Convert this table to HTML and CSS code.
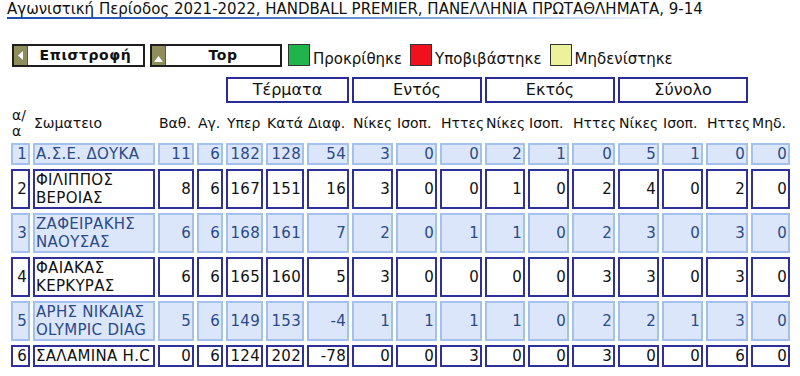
FILE: index.html
```html
<!DOCTYPE html>
<html lang="el">
<head>
<meta charset="utf-8">
<title>Βαθμολογία</title>
<link rel="stylesheet" href="styles.css">
</head>
<body>
<div class="title">Αγωνιστική Περίοδος 2021-2022, HANDBALL PREMIER, ΠΑΝΕΛΛΗΝΙΑ ΠΡΩΤΑΘΛΗΜΑΤΑ, 9-14</div>
<div class="rule"></div>

<div class="toolbar">
  <a class="btn btn-back" href="#">
    <span class="btn-side"><svg width="6" height="9" viewBox="0 0 6 9"><polygon points="5,0 5,9 0,4.5" fill="#fff"/></svg></span>
    <span class="btn-label">Επιστροφή</span>
  </a>
  <a class="btn btn-top" href="#">
    <span class="btn-side side-low"><svg width="9" height="6" viewBox="0 0 9 6"><polygon points="0,6 9,6 4.5,0" fill="#fff"/></svg></span>
    <span class="btn-label">Top</span>
  </a>
  <span class="legend legend-first"><span class="swatch sw-green"></span><span class="legend-text">Προκρίθηκε</span></span>
  <span class="legend"><span class="swatch sw-red"></span><span class="legend-text">Υποβιβάστηκε</span></span>
  <span class="legend"><span class="swatch sw-yellow"></span><span class="legend-text">Μηδενίστηκε</span></span>
</div>

<table class="standings">
  <colgroup>
    <col class="c-pos"><col class="c-name"><col class="c-pts"><col class="c-gp">
    <col class="c-for"><col class="c-against"><col class="c-diff">
    <col class="c-w1"><col class="c-d1"><col class="c-l1">
    <col class="c-w2"><col class="c-d2"><col class="c-l2">
    <col class="c-w3"><col class="c-d3"><col class="c-l3">
    <col class="c-z">
  </colgroup>
  <tr class="groups">
    <td colspan="4" class="blank"></td>
    <td colspan="3" class="grp">Τέρματα</td>
    <td colspan="3" class="grp">Εντός</td>
    <td colspan="3" class="grp">Εκτός</td>
    <td colspan="3" class="grp">Σύνολο</td>
    <td class="blank"></td>
  </tr>
  <tr class="heads">
    <th>α/ α</th><th>Σωματειο</th><th>Βαθ.</th><th>Αγ.</th><th>Υπερ</th><th>Κατά</th><th>Διαφ.</th>
    <th>Νίκες</th><th>Ισοπ.</th><th>Ηττες</th><th>Νίκες</th><th>Ισοπ.</th><th>Ηττες</th>
    <th>Νίκες</th><th>Ισοπ.</th><th>Ηττες</th><th>Μηδ.</th>
  </tr>
  <tr class="row alt">
    <td>1</td><td class="name">Α.Σ.Ε. ΔΟΥΚΑ</td><td>11</td><td>6</td><td>182</td><td>128</td><td>54</td>
    <td>3</td><td>0</td><td>0</td><td>2</td><td>1</td><td>0</td><td>5</td><td>1</td><td>0</td><td>0</td>
  </tr>
  <tr class="row">
    <td>2</td><td class="name">ΦΙΛΙΠΠΟΣ ΒΕΡΟΙΑΣ</td><td>8</td><td>6</td><td>167</td><td>151</td><td>16</td>
    <td>3</td><td>0</td><td>0</td><td>1</td><td>0</td><td>2</td><td>4</td><td>0</td><td>2</td><td>0</td>
  </tr>
  <tr class="row alt">
    <td>3</td><td class="name">ΖΑΦΕΙΡΑΚΗΣ ΝΑΟΥΣΑΣ</td><td>6</td><td>6</td><td>168</td><td>161</td><td>7</td>
    <td>2</td><td>0</td><td>1</td><td>1</td><td>0</td><td>2</td><td>3</td><td>0</td><td>3</td><td>0</td>
  </tr>
  <tr class="row">
    <td>4</td><td class="name">ΦΑΙΑΚΑΣ ΚΕΡΚΥΡΑΣ</td><td>6</td><td>6</td><td>165</td><td>160</td><td>5</td>
    <td>3</td><td>0</td><td>0</td><td>0</td><td>0</td><td>3</td><td>3</td><td>0</td><td>3</td><td>0</td>
  </tr>
  <tr class="row alt">
    <td>5</td><td class="name">ΑΡΗΣ ΝΙΚΑΙΑΣ OLYMPIC DIAG</td><td>5</td><td>6</td><td>149</td><td>153</td><td>-4</td>
    <td>1</td><td>1</td><td>1</td><td>1</td><td>0</td><td>2</td><td>2</td><td>1</td><td>3</td><td>0</td>
  </tr>
  <tr class="row">
    <td>6</td><td class="name">ΣΑΛΑΜΙΝΑ Η.C</td><td>0</td><td>6</td><td>124</td><td>202</td><td>-78</td>
    <td>0</td><td>0</td><td>3</td><td>0</td><td>0</td><td>3</td><td>0</td><td>0</td><td>6</td><td>0</td>
  </tr>
</table>
</body>
</html>
```

FILE: styles.css
```css
* { box-sizing: border-box; }

html, body {
  margin: 0;
  padding: 0;
  background: #fff;
}

body {
  padding: 0 8px;
  font-family: "DejaVu Sans", Verdana, sans-serif;
  color: #000;
}

.title {
  margin-left: -1px;
  padding-top: 2px;
  font-size: 15px;
  line-height: 15px;
  white-space: nowrap;
  color: #111;
}

.rule {
  margin-left: -1px;
  width: 660px;
  height: 2px;
  background: linear-gradient(to right, #1a4bb0 0%, #3f6cc0 35%, #8fb0e0 70%, rgba(255,255,255,0) 100%);
}

.toolbar {
  display: flex;
  align-items: flex-end;
  height: 23px;
  margin-top: 25px;
  padding-left: 4px;
}

.btn {
  display: flex;
  width: 133px;
  height: 23px;
  border: 2px solid #1e1e1e;
  text-decoration: none;
  color: #111;
  background: #fff;
}

.btn-top {
  margin-left: 5px;
  width: 132px;
}

.btn-side {
  width: 14px;
  flex: none;
  background: #8e8e5c;
  display: flex;
  align-items: center;
  justify-content: center;
  border-right: 1px solid #5a5a3a;
}

.side-low {
  align-items: flex-end;
  padding-bottom: 3px;
}

.btn-label {
  flex: 1;
  text-align: center;
  font-weight: bold;
  font-size: 14px;
  line-height: 19px;
  letter-spacing: 0.6px;
}

.legend {
  display: flex;
  align-items: flex-end;
  margin-left: 8px;
}

.legend-first {
  margin-left: 6px;
}

.swatch {
  width: 22px;
  height: 22px;
  border: 1px solid #333;
  margin-bottom: 1px;
}

.sw-green { background: #20b54a; }
.sw-red { background: #f0101e; }
.sw-yellow { background: #ecf29a; }

.legend-text {
  margin-left: 3px;
  font-size: 15px;
  line-height: 16px;
  color: #111;
}

.standings {
  margin-top: 6px;
  border-collapse: separate;
  border-spacing: 3px 4px;
  table-layout: fixed;
  width: 785px;
  font-size: 14px;
}

.c-pos { width: 19px; }
.c-name { width: 122px; }
.c-pts { width: 36px; }
.c-gp { width: 26px; }
.c-for { width: 37px; }
.c-against { width: 38px; }
.c-diff { width: 42px; }
.c-w1 { width: 41px; }
.c-d1 { width: 41px; }
.c-l1 { width: 42px; }
.c-w2 { width: 40px; }
.c-d2 { width: 41px; }
.c-l2 { width: 43px; }
.c-w3 { width: 41px; }
.c-d3 { width: 41px; }
.c-l3 { width: 42px; }
.c-z { width: 39px; }

.groups td {
  padding: 0;
}

.groups .grp {
  border: 2px solid #2b2b98;
  background: #fff;
  text-align: center;
  font-size: 16px;
  line-height: 22px;
  color: #111;
}

.groups .blank {
  border: 0;
}

.heads th {
  font-weight: normal;
  text-align: left;
  vertical-align: middle;
  padding: 0 0 0 1px;
  border: 0;
  line-height: 16px;
  white-space: nowrap;
  color: #111;
}

.heads th:first-child {
  white-space: normal;
  word-spacing: 20px;
}

.row td {
  padding: 0 1px 0 1px;
  border: 2px solid #30309a;
  background: #fff;
  font-size: 15px;
  letter-spacing: 0.3px;
  line-height: 18px;
  text-align: right;
  vertical-align: middle;
  color: #111;
}

.row td.name {
  text-align: left;
}

.row.alt td {
  background: #dce6fb;
  border-color: #a4c1ee;
  color: #2b4a88;
}
```
